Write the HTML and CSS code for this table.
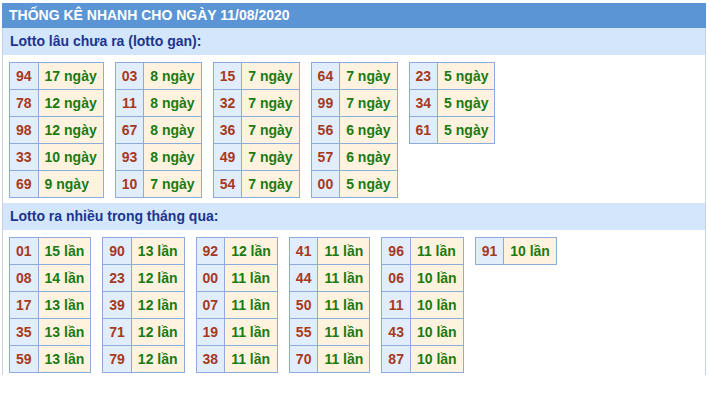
FILE: index.html
```html
<!DOCTYPE html>
<html lang="vi">
<head>
  <meta charset="UTF-8">
  <meta name="viewport" content="width=device-width, initial-scale=1.0">
  <title>Thống kê nhanh</title>
  <link rel="stylesheet" href="styles.css">
</head>
<body>

  <div class="box">
    <div class="box-title">THỐNG KÊ NHANH CHO NGÀY 11/08/2020</div>

    <div class="sub-title">Lotto lâu chưa ra (lotto gan):</div>
    <div class="tables">
      <table class="tk">
        <tr><td class="so">94</td><td class="ct">17 ngày</td></tr>
        <tr><td class="so">78</td><td class="ct">12 ngày</td></tr>
        <tr><td class="so">98</td><td class="ct">12 ngày</td></tr>
        <tr><td class="so">33</td><td class="ct">10 ngày</td></tr>
        <tr><td class="so">69</td><td class="ct">9 ngày</td></tr>
      </table>
      <table class="tk">
        <tr><td class="so">03</td><td class="ct">8 ngày</td></tr>
        <tr><td class="so">11</td><td class="ct">8 ngày</td></tr>
        <tr><td class="so">67</td><td class="ct">8 ngày</td></tr>
        <tr><td class="so">93</td><td class="ct">8 ngày</td></tr>
        <tr><td class="so">10</td><td class="ct">7 ngày</td></tr>
      </table>
      <table class="tk">
        <tr><td class="so">15</td><td class="ct">7 ngày</td></tr>
        <tr><td class="so">32</td><td class="ct">7 ngày</td></tr>
        <tr><td class="so">36</td><td class="ct">7 ngày</td></tr>
        <tr><td class="so">49</td><td class="ct">7 ngày</td></tr>
        <tr><td class="so">54</td><td class="ct">7 ngày</td></tr>
      </table>
      <table class="tk">
        <tr><td class="so">64</td><td class="ct">7 ngày</td></tr>
        <tr><td class="so">99</td><td class="ct">7 ngày</td></tr>
        <tr><td class="so">56</td><td class="ct">6 ngày</td></tr>
        <tr><td class="so">57</td><td class="ct">6 ngày</td></tr>
        <tr><td class="so">00</td><td class="ct">5 ngày</td></tr>
      </table>
      <table class="tk">
        <tr><td class="so">23</td><td class="ct">5 ngày</td></tr>
        <tr><td class="so">34</td><td class="ct">5 ngày</td></tr>
        <tr><td class="so">61</td><td class="ct">5 ngày</td></tr>
      </table>
    </div>

    <div class="sub-title">Lotto ra nhiều trong tháng qua:</div>
    <div class="tables">
      <table class="tk">
        <tr><td class="so">01</td><td class="ct">15 lần</td></tr>
        <tr><td class="so">08</td><td class="ct">14 lần</td></tr>
        <tr><td class="so">17</td><td class="ct">13 lần</td></tr>
        <tr><td class="so">35</td><td class="ct">13 lần</td></tr>
        <tr><td class="so">59</td><td class="ct">13 lần</td></tr>
      </table>
      <table class="tk">
        <tr><td class="so">90</td><td class="ct">13 lần</td></tr>
        <tr><td class="so">23</td><td class="ct">12 lần</td></tr>
        <tr><td class="so">39</td><td class="ct">12 lần</td></tr>
        <tr><td class="so">71</td><td class="ct">12 lần</td></tr>
        <tr><td class="so">79</td><td class="ct">12 lần</td></tr>
      </table>
      <table class="tk">
        <tr><td class="so">92</td><td class="ct">12 lần</td></tr>
        <tr><td class="so">00</td><td class="ct">11 lần</td></tr>
        <tr><td class="so">07</td><td class="ct">11 lần</td></tr>
        <tr><td class="so">19</td><td class="ct">11 lần</td></tr>
        <tr><td class="so">38</td><td class="ct">11 lần</td></tr>
      </table>
      <table class="tk">
        <tr><td class="so">41</td><td class="ct">11 lần</td></tr>
        <tr><td class="so">44</td><td class="ct">11 lần</td></tr>
        <tr><td class="so">50</td><td class="ct">11 lần</td></tr>
        <tr><td class="so">55</td><td class="ct">11 lần</td></tr>
        <tr><td class="so">70</td><td class="ct">11 lần</td></tr>
      </table>
      <table class="tk">
        <tr><td class="so">96</td><td class="ct">11 lần</td></tr>
        <tr><td class="so">06</td><td class="ct">10 lần</td></tr>
        <tr><td class="so">11</td><td class="ct">10 lần</td></tr>
        <tr><td class="so">43</td><td class="ct">10 lần</td></tr>
        <tr><td class="so">87</td><td class="ct">10 lần</td></tr>
      </table>
      <table class="tk">
        <tr><td class="so">91</td><td class="ct">10 lần</td></tr>
      </table>
    </div>
  </div>

</body>
</html>
```

FILE: styles.css
```css
body {
  font-family: Arial, "Liberation Sans", sans-serif;
  margin: 0;
  padding: 0;
  background-color: #fff;
}

.box {
  width: 702px;
  margin: 3px 0 0 2px;
  border-left: 1px solid #c7d2de;
  border-right: 1px solid #c7d2de;
}

.box-title {
  margin: 0 -1px;
  height: 25px;
  line-height: 25px;
  padding-left: 7px;
  background-color: #5b95d6;
  color: #fff;
  font-size: 14px;
  font-weight: bold;
}

.sub-title {
  height: 27px;
  line-height: 26px;
  padding-left: 7px;
  background-color: #d4e6fb;
  color: #1b3590;
  font-size: 14px;
  font-weight: bold;
}

.tables {
  display: flex;
  align-items: flex-start;
  gap: 11px;
  padding: 7px 6px 5px;
}

.tables:last-child {
  padding-bottom: 2px;
}

.tk {
  border-collapse: collapse;
  font-size: 14px;
  font-weight: bold;
}

.tk td {
  border: 1px solid #8eabdd;
  padding: 5px 6px;
  line-height: 16px;
}

.so {
  background-color: #e2edfc;
  color: #a53a22;
  text-align: center;
}

.ct {
  background-color: #fff3df;
  color: #1b7a12;
}
```
